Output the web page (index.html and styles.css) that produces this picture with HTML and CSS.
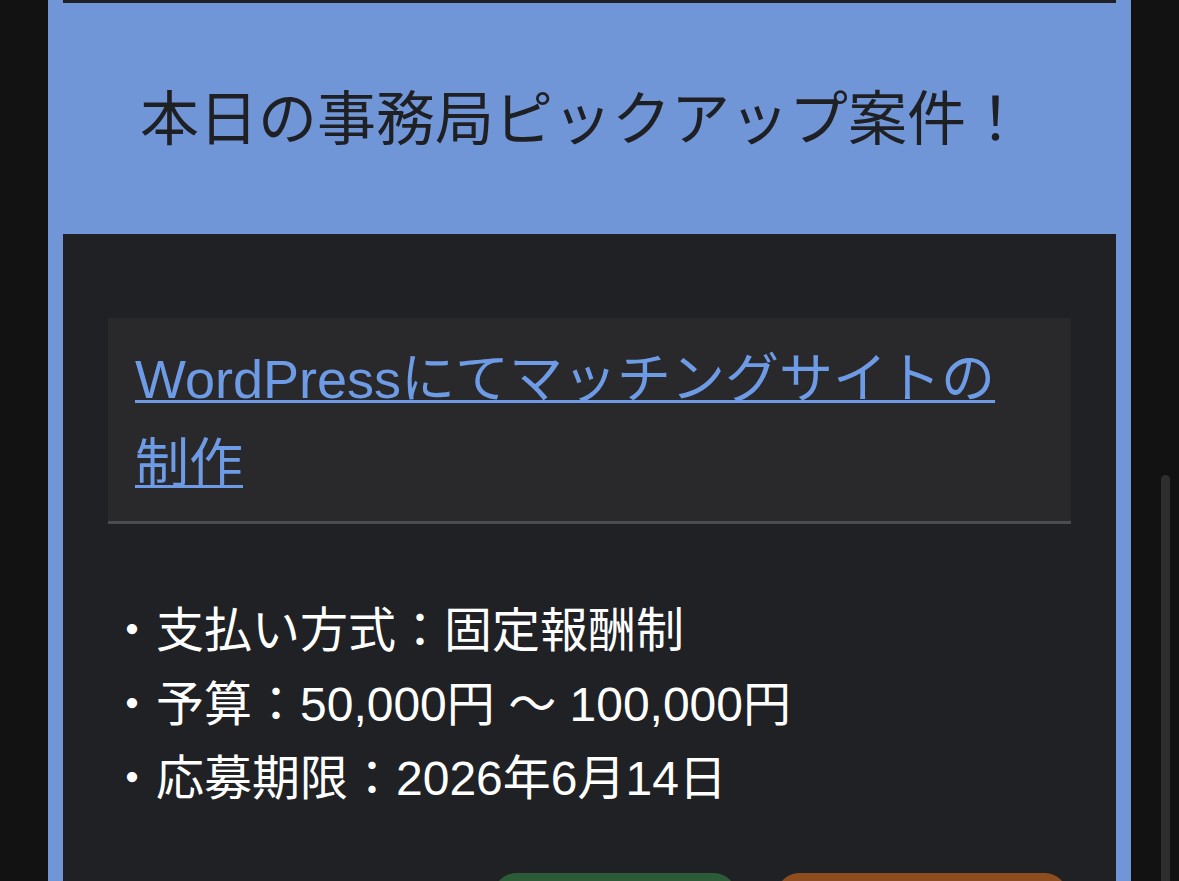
FILE: index.html
```html
<!DOCTYPE html>
<html lang="ja">
<head>
<meta charset="utf-8">
<title>本日の事務局ピックアップ案件</title>
<link rel="stylesheet" href="styles.css">
</head>
<body>
<div class="panel">
  <div class="prev-card"></div>
  <h2 class="pickup-title">本日の事務局ピックアップ案件！</h2>
  <div class="job-card">
    <div class="job-head">
      <a class="job-link" href="#">WordPressにてマッチングサイトの制作</a>
    </div>
    <p class="job-info">・支払い方式：固定報酬制<br>・予算：50,000円 〜 100,000円<br>・応募期限：2026年6月14日</p>
    <div class="job-actions">
      <a class="btn btn-detail" href="#"></a>
      <a class="btn btn-apply" href="#"></a>
    </div>
  </div>
</div>
<div class="scroll-thumb"></div>
</body>
</html>
```
FILE: styles.css
```css
html, body {
  margin: 0;
  padding: 0;
  height: 100%;
  overflow: hidden;
}
body {
  background: #121212;
  font-family: "Liberation Sans", "Noto Sans CJK JP", sans-serif;
}
.panel {
  margin-left: 48px;
  width: 1083px;
  min-height: 100%;
  box-sizing: border-box;
  padding: 0 15px;
  background: #7096d8;
}
.prev-card {
  height: 3px;
  background: #202124;
}
.pickup-title {
  margin: 0;
  padding: 77px 0 84px 77px;
  font-family: "Noto Sans CJK JP", sans-serif;
  font-weight: 400;
  font-size: 59px;
  line-height: 70px;
  color: #1f2023;
  white-space: nowrap;
}
.job-card {
  background: #202124;
  padding: 84px 45px 0 45px;
  height: 700px;
}
.job-head {
  background: #29292b;
  border-bottom: 3px solid #4b4c4e;
  padding: 19px 27px 14px 27px;
}
.job-link {
  font-size: 54px;
  line-height: 85px;
  color: #6e9be6;
  text-decoration: underline;
  text-decoration-thickness: 3px;
}
.job-info {
  margin: 70px 0 0 0;
  font-size: 48px;
  line-height: 74px;
  color: #ffffff;
}
.job-actions {
  display: flex;
  justify-content: flex-end;
  gap: 41px;
  margin-top: 57px;
  padding-right: 4px;
}
.btn {
  display: block;
  height: 80px;
  border-radius: 22px;
}
.btn-detail {
  width: 242px;
  background: #2b5c37;
}
.btn-apply {
  width: 290px;
  background: #8d4d1f;
}
.scroll-thumb {
  position: fixed;
  left: 1161px;
  top: 475px;
  width: 9px;
  height: 420px;
  border-radius: 5px;
  background: #2e2e2e;
}
```
